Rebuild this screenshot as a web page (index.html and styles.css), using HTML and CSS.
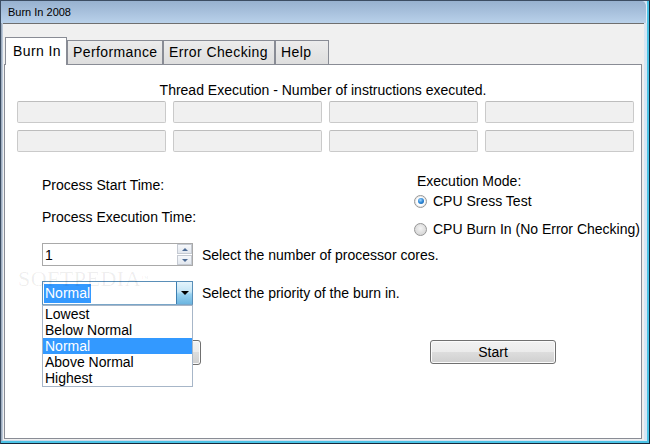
FILE: index.html
```html
<!DOCTYPE html>
<html>
<head>
<meta charset="utf-8">
<link rel="stylesheet" href="styles.css">
</head>
<body>
<div class="window">
  <div class="titlebar">Burn In 2008</div>
  <div class="frame">
    <div class="client">
      <div class="tabs">
        <div class="tab tab-active">Burn In</div>
        <div class="tab tab-perf">Performance</div>
        <div class="tab tab-err">Error Checking</div>
        <div class="tab tab-help">Help</div>
      </div>
      <div class="panel">
        <div class="heading">Thread Execution - Number of instructions executed.</div>
        <div class="grid">
          <div class="box"></div><div class="box"></div><div class="box"></div><div class="box"></div>
          <div class="box"></div><div class="box"></div><div class="box"></div><div class="box"></div>
        </div>
        <div class="controls">
          <div class="info">
            <div class="info-left">
              <div class="line">Process Start Time:</div>
              <div class="line line-exec">Process Execution Time:</div>
            </div>
            <div class="info-right">
              <div class="line mode-title">Execution Mode:</div>
              <div class="radio-row radio-first"><span class="radio radio-checked"></span><span>CPU Sress Test</span></div>
              <div class="radio-row radio-second"><span class="radio"></span><span>CPU Burn In (No Error Checking)</span></div>
            </div>
          </div>
          <div class="row row-cores">
            <div class="spin">
              <span class="spin-value">1</span>
              <div class="spin-btns">
                <div class="spin-btn"><span class="tri-up"></span></div>
                <div class="spin-btn"><span class="tri-down"></span></div>
              </div>
            </div>
            <span class="row-label">Select the number of processor cores.</span>
          </div>
          <div class="row row-priority">
            <div class="combo">
              <span class="combo-sel">Normal</span>
              <div class="combo-drop"><span class="drop-arrow"></span></div>
            </div>
            <span class="row-label">Select the priority of the burn in.</span>
            <div class="list">
              <div class="item">Lowest</div>
              <div class="item">Below Normal</div>
              <div class="item item-sel">Normal</div>
              <div class="item">Above Normal</div>
              <div class="item">Highest</div>
            </div>
          </div>
          <div class="row row-buttons">
            <div class="btn btn-hidden"></div>
            <div class="btn btn-start">Start</div>
          </div>
        </div>
        <div class="watermark">SOFTPEDIA<sup>™</sup></div>
      </div>
    </div>
  </div>
</div>
</body>
</html>
```

FILE: styles.css
```css
html, body {
  margin: 0;
  padding: 0;
  background: #ffffff;
}

body {
  width: 650px;
  height: 444px;
  overflow: hidden;
  font-family: "Liberation Sans", Arial, sans-serif;
  font-size: 14px;
  color: #000000;
}

.window {
  width: 650px;
  height: 444px;
  box-sizing: border-box;
  border-top: 1px solid #3c4d62;
  border-left: 1px solid #3c4d62;
  border-right: 1px solid #16283a;
  border-bottom: 1px solid #16283a;
  padding: 0 2px 2px 0;
  background: #d3e4f3;
  box-shadow: inset -2px 0 #4cc3e6, inset 0 -2px #4cc3e6;
  display: flex;
  flex-direction: column;
}

.titlebar {
  height: 22px;
  flex: none;
  box-sizing: border-box;
  padding-left: 7px;
  line-height: 22px;
  font-size: 11px;
  color: #000000;
  background: linear-gradient(#97b1cf, #b9d1ea);
  border-right: 1px solid #e4eef8;
  border-top-right-radius: 5px;
}

.frame {
  flex: 1;
  display: flex;
  padding: 0 3px 1px 2px;
  background: linear-gradient(90deg, #8f9db0 0, #c9d8e8 2px, #d6e6f4 100%);
}

.client {
  flex: 1;
  display: flex;
  flex-direction: column;
  background: #f0f0f0;
  border-top: 1px solid #6f6f6f;
}

.tabs {
  display: flex;
  align-items: flex-end;
  height: 27px;
  margin-top: 13px;
  padding-left: 2px;
  flex: none;
}

.tab {
  box-sizing: border-box;
  height: 24px;
  line-height: 23px;
  padding-left: 5px;
  border: 1px solid #898c95;
  border-bottom: none;
  background: linear-gradient(#ececec, #dedede);
  white-space: nowrap;
  letter-spacing: 0.4px;
}

.tab-active {
  position: relative;
  z-index: 1;
  width: 62px;
  height: 28px;
  margin-bottom: -1px;
  padding-left: 7px;
  line-height: 27px;
  background: #ffffff;
}

.tab-perf { width: 96px; }
.tab-err { width: 112px; }
.tab-help { width: 54px; }

.panel {
  position: relative;
  flex: 1;
  margin: 0 2px 1px 1px;
  background: #ffffff;
  border: 1px solid #898c95;
}

.heading {
  margin-top: 17px;
  line-height: 16px;
  text-align: center;
}

.grid {
  display: grid;
  grid-template-columns: repeat(4, 149px);
  grid-auto-rows: 22px;
  gap: 7px;
  margin: 3px 0 0 12px;
}

.box {
  box-sizing: border-box;
  background: #f0f0f0;
  border: 1px solid #cacaca;
  border-top-color: #bdbdbd;
  border-radius: 2px;
}

.controls {
  margin-left: 37px;
}

.info {
  display: flex;
  margin-top: 21px;
}

.info-left {
  width: 372px;
  padding-top: 4px;
}

.line {
  line-height: 16px;
  white-space: nowrap;
}

.line-exec {
  margin-top: 16px;
}

.mode-title {
  padding-left: 3px;
}

.radio-row {
  display: flex;
  align-items: center;
  gap: 6px;
  height: 16px;
  white-space: nowrap;
}

.radio-first { margin-top: 4px; }
.radio-second { margin-top: 12px; }

.radio {
  width: 13px;
  height: 13px;
  box-sizing: border-box;
  border-radius: 50%;
  border: 1px solid #969696;
  background: radial-gradient(circle at 50% 40%, #f4f4f4 0, #e2e2e2 45%, #cfcfcf 100%);
  display: flex;
  align-items: center;
  justify-content: center;
}

.radio-checked {
  background: #ffffff;
  box-shadow: inset 0 0 0 1px #e8e8e8;
}

.radio-checked::after {
  content: "";
  width: 6px;
  height: 6px;
  border-radius: 50%;
  background: radial-gradient(circle at 40% 35%, #9fd6ff 0, #2c86d6 50%, #14569a 100%);
}

.row {
  display: flex;
  align-items: center;
}

.row-label {
  margin-left: 9px;
  white-space: nowrap;
}

.row-cores {
  margin-top: 6px;
  height: 23px;
}

.spin {
  width: 151px;
  height: 23px;
  box-sizing: border-box;
  border: 1px solid #a9a9a9;
  display: flex;
  align-items: center;
}

.spin-value {
  padding-left: 2px;
}

.spin-btns {
  margin-left: auto;
  width: 15px;
  height: 21px;
  display: flex;
  flex-direction: column;
  gap: 1px;
}

.spin-btn {
  flex: 1;
  box-sizing: border-box;
  border: 1px solid #c5cad2;
  background: linear-gradient(#f6f8fb, #e2e7ee);
  display: flex;
  align-items: center;
  justify-content: center;
}

.tri-up {
  width: 0;
  height: 0;
  border-left: 3px solid transparent;
  border-right: 3px solid transparent;
  border-bottom: 3px solid #4d6b94;
}

.tri-down {
  width: 0;
  height: 0;
  border-left: 3px solid transparent;
  border-right: 3px solid transparent;
  border-top: 3px solid #4d6b94;
}

.row-priority {
  position: relative;
  margin-top: 15px;
  height: 24px;
}

.combo {
  width: 151px;
  height: 24px;
  box-sizing: border-box;
  border: 1px solid #5a8fb8;
  border-bottom-color: #7aa6c8;
  display: flex;
  align-items: center;
  padding-left: 1px;
  background: #ffffff;
}

.combo-sel {
  background: #3399ff;
  color: #ffffff;
  padding: 0 1px;
  line-height: 19px;
}

.combo-drop {
  margin-left: auto;
  width: 16px;
  height: 22px;
  box-sizing: border-box;
  border-left: 1px solid #3c7fb1;
  background: linear-gradient(#e5f4fc 0, #c4e5f6 45%, #98d1ef 55%, #6cb5e0 100%);
  display: flex;
  align-items: center;
  justify-content: center;
}

.drop-arrow {
  width: 0;
  height: 0;
  border-left: 4px solid transparent;
  border-right: 4px solid transparent;
  border-top: 4px solid #000000;
}

.list {
  position: absolute;
  z-index: 2;
  top: 24px;
  left: 0;
  width: 151px;
  box-sizing: border-box;
  border: 1px solid #a7b6c8;
  background: #ffffff;
}

.item {
  height: 16px;
  line-height: 16px;
  padding-left: 2px;
  white-space: nowrap;
}

.item-sel {
  background: #3399ff;
  color: #ffffff;
}

.row-buttons {
  margin-top: 35px;
  align-items: flex-start;
}

.btn {
  box-sizing: border-box;
  width: 126px;
  height: 24px;
  border: 1px solid #707070;
  border-radius: 3px;
  background: linear-gradient(#f2f2f2 0, #ebebeb 50%, #dddddd 50%, #cfcfcf 100%);
  box-shadow: inset 0 0 0 1px #fbfbfb;
  text-align: center;
  line-height: 22px;
}

.btn-hidden {
  margin-left: 33px;
  height: 25px;
}

.btn-start {
  margin-left: 229px;
}

.watermark {
  position: absolute;
  z-index: 3;
  left: 13px;
  top: 203px;
  font-family: "Liberation Serif", serif;
  font-size: 22px;
  line-height: 22px;
  letter-spacing: 0.5px;
  color: rgba(0, 0, 0, 0.07);
  pointer-events: none;
}

.watermark sup {
  font-size: 8px;
  vertical-align: top;
}
```
